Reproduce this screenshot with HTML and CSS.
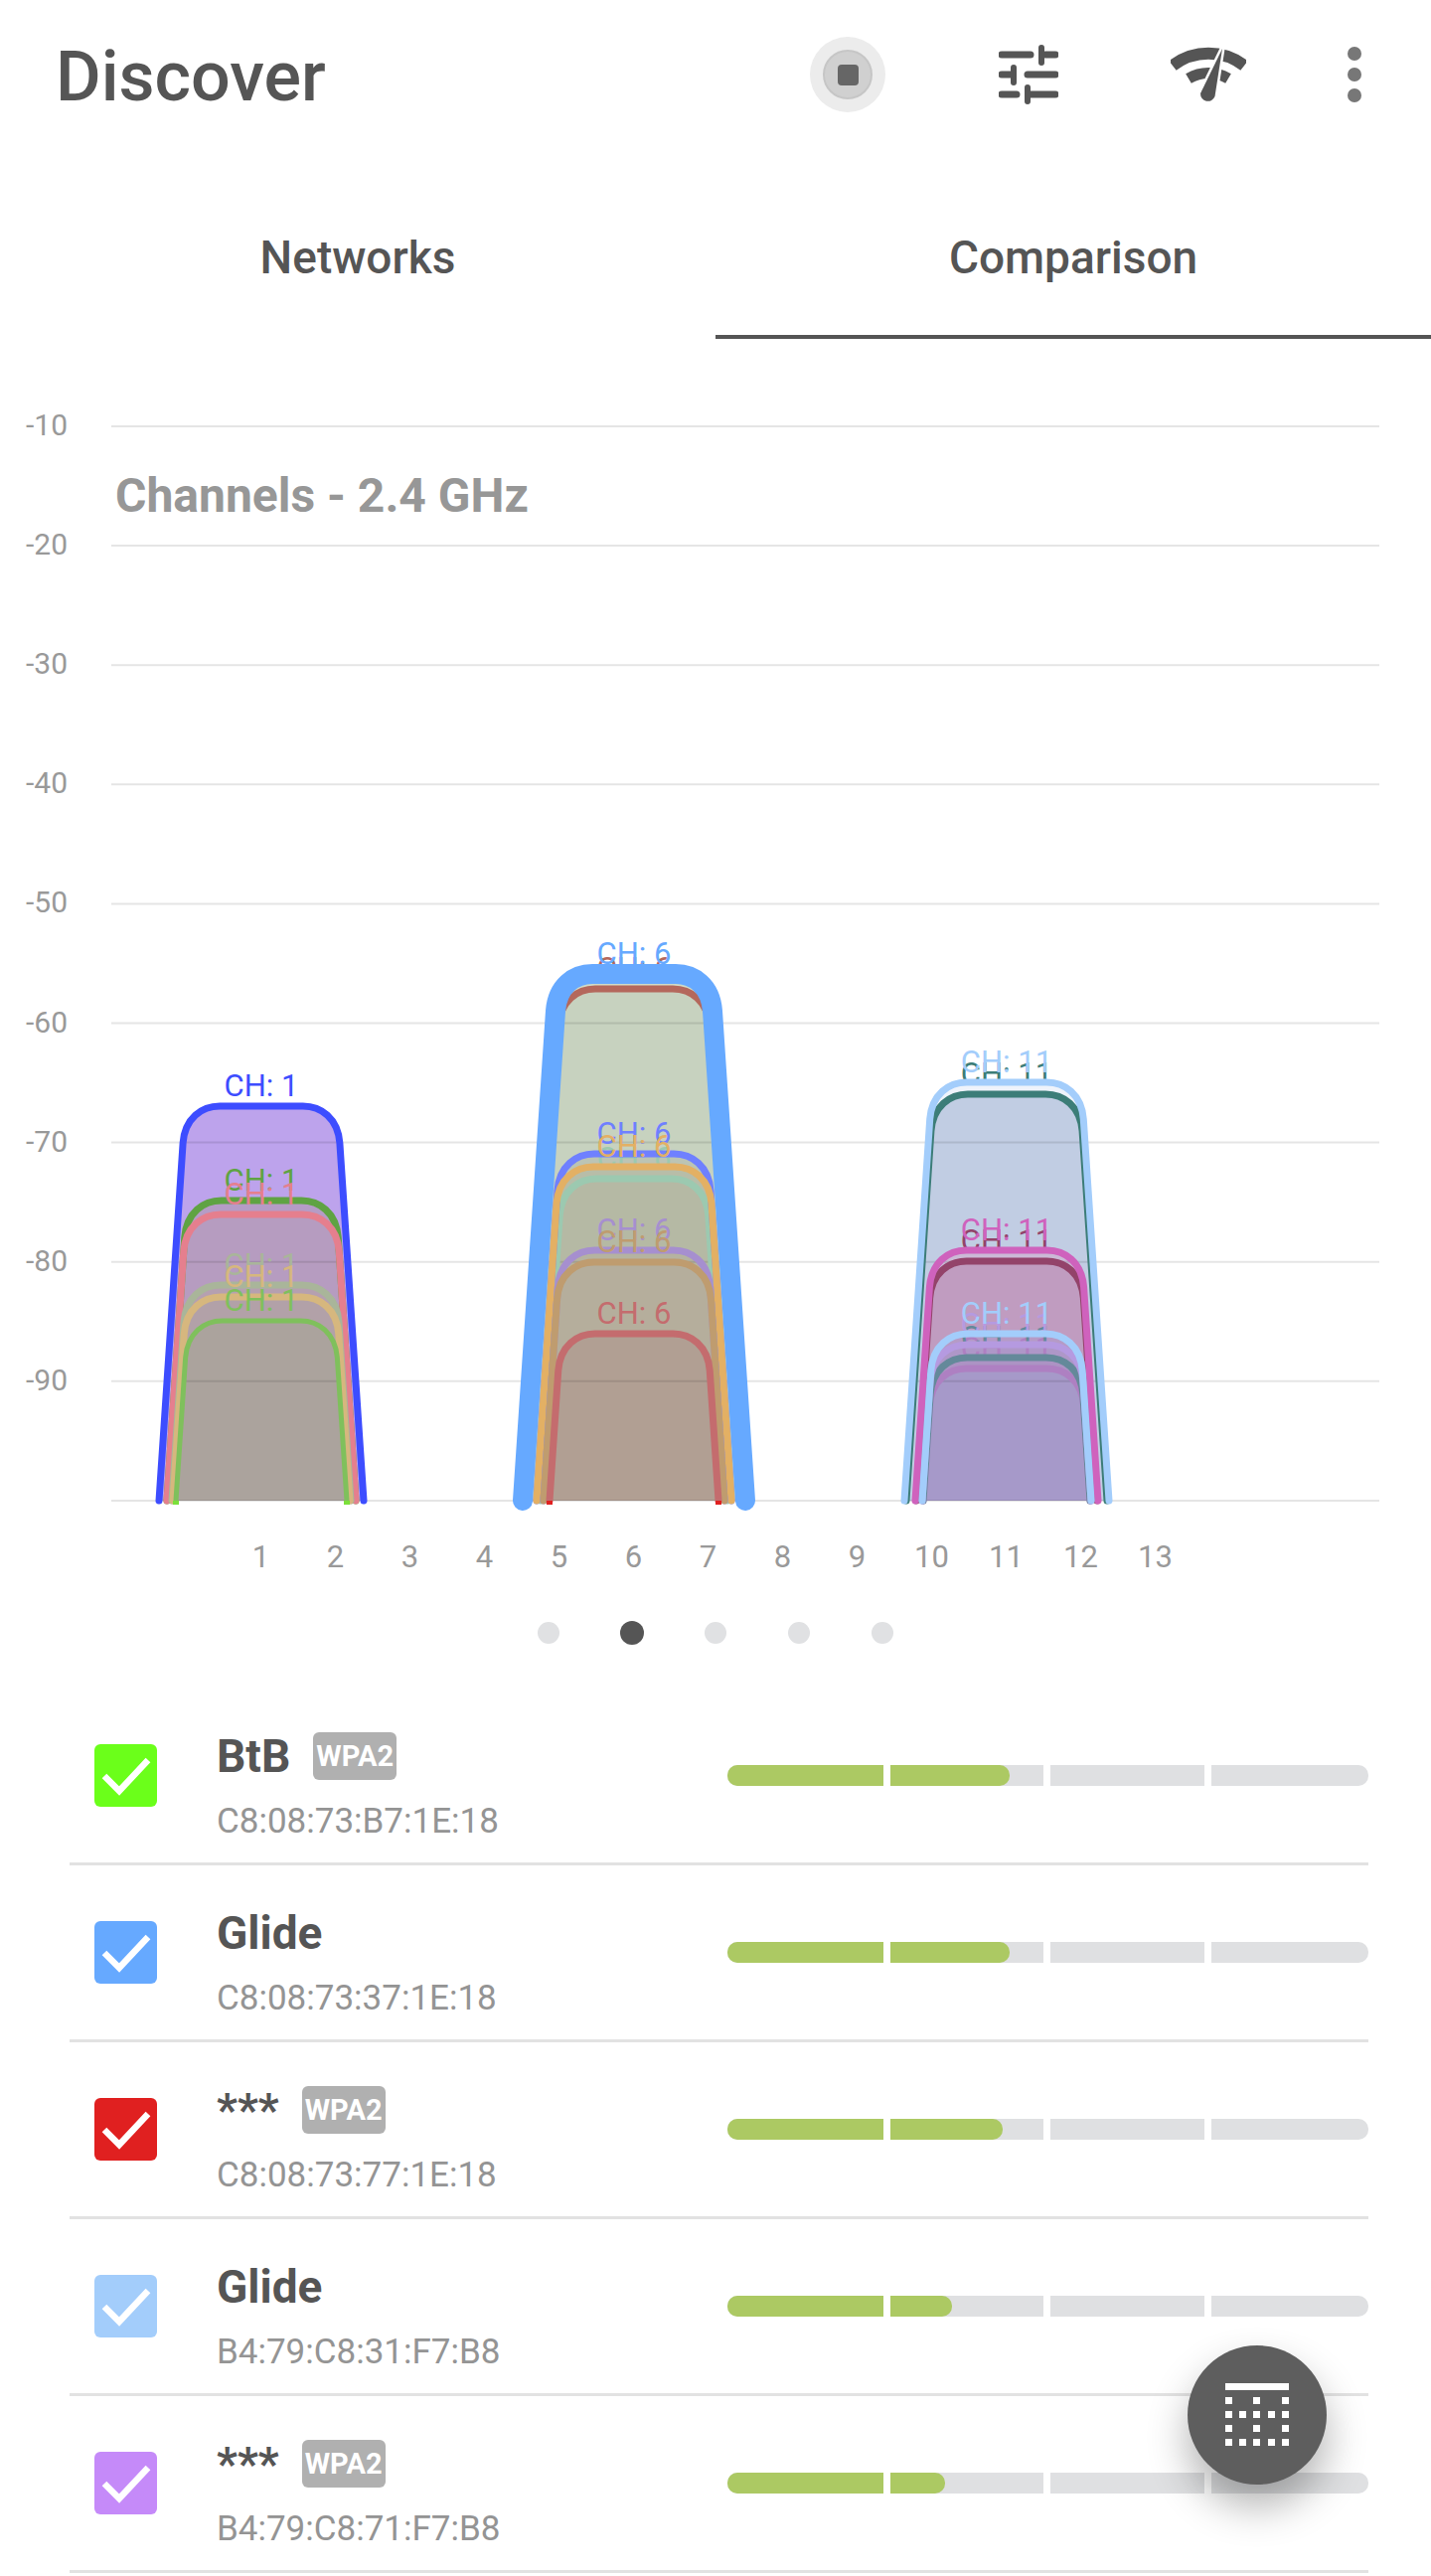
FILE: index.html
```html
<!DOCTYPE html>
<html lang="en">
<head>
    <meta charset="UTF-8">
    <meta name="viewport" content="width=device-width, initial-scale=1.0">
    <title>Discover</title>
    <link rel="stylesheet" href="styles.css">
</head>
<body>
    <div class="page">
        <header class="topbar">
            <h1 class="title">Discover</h1>
            <div class="actions">
                <div class="record"><div class="record-ring"><div class="record-stop"></div></div></div>
                <svg class="icon-tune" width="60" height="60" viewBox="0 0 60 60">
                    <g fill="none" stroke="#555" stroke-width="7" stroke-linecap="round">
                        <path d="M3 10H32M47 10H57"/>
                        <path d="M3 30H14M29 30H57"/>
                        <path d="M3 50H18M32 50H57"/>
                    </g>
                    <g fill="none" stroke="#555" stroke-width="6" stroke-linecap="round">
                        <path d="M43 3V18"/>
                        <path d="M15 23V38"/>
                        <path d="M29 43V57"/>
                    </g>
                </svg>
                <svg class="icon-wifi" width="76" height="56" viewBox="0 0 76 56">
                    <g fill="none" stroke="#555">
                        <path stroke-width="12" d="M2 19A59 59 0 0 1 74 19"/>
                        <path stroke-width="11" d="M18 32A39 39 0 0 1 58 32"/>
                    </g>
                    <path fill="#555" stroke="#fff" stroke-width="5" paint-order="stroke" d="M52 2L44.500 50A7.500 7.500 0 0 1 30 47Z"/>
                </svg>
                <svg class="icon-more" width="14" height="56" viewBox="0 0 14 56">
                    <circle cx="7" cy="7" r="7"/>
                    <circle cx="7" cy="28" r="7"/>
                    <circle cx="7" cy="49" r="7"/>
                </svg>
            </div>
        </header>

        <nav class="tabs">
            <div class="tab">Networks</div>
            <div class="tab tab-active">Comparison</div>
        </nav>

        <svg class="chart" id="chart" width="1440" height="1200" viewBox="0 400 1440 1200">
            <g id="chartFills"></g>
            <g id="chartGrid"></g>
            <text class="chart-title" x="116" y="515">Channels - 2.4 GHz</text>
            <g id="chartLines"></g>
        </svg>

        <div class="pager">
            <span class="dot"></span>
            <span class="dot dot-active"></span>
            <span class="dot"></span>
            <span class="dot"></span>
            <span class="dot"></span>
        </div>

        <ul class="networks">
            <li class="network">
                <svg class="check check-green" viewBox="0 0 63 63"><path d="M10 32L25 47L54 16"/></svg>
                <div class="info">
                    <div class="name-line"><span class="name">BtB</span><span class="badge">WPA2</span></div>
                    <div class="mac">C8:08:73:B7:1E:18</div>
                </div>
                <div class="signal">
                    <div class="signal-fill" style="width: 44%"></div>
                    <span class="tick tick-1"></span><span class="tick tick-2"></span><span class="tick tick-3"></span>
                </div>
            </li>
            <li class="network">
                <svg class="check check-blue" viewBox="0 0 63 63"><path d="M10 32L25 47L54 16"/></svg>
                <div class="info">
                    <div class="name-line"><span class="name">Glide</span></div>
                    <div class="mac">C8:08:73:37:1E:18</div>
                </div>
                <div class="signal">
                    <div class="signal-fill" style="width: 44%"></div>
                    <span class="tick tick-1"></span><span class="tick tick-2"></span><span class="tick tick-3"></span>
                </div>
            </li>
            <li class="network">
                <svg class="check check-red" viewBox="0 0 63 63"><path d="M10 32L25 47L54 16"/></svg>
                <div class="info">
                    <div class="name-line"><span class="name">***</span><span class="badge">WPA2</span></div>
                    <div class="mac">C8:08:73:77:1E:18</div>
                </div>
                <div class="signal">
                    <div class="signal-fill" style="width: 43%"></div>
                    <span class="tick tick-1"></span><span class="tick tick-2"></span><span class="tick tick-3"></span>
                </div>
            </li>
            <li class="network">
                <svg class="check check-sky" viewBox="0 0 63 63"><path d="M10 32L25 47L54 16"/></svg>
                <div class="info">
                    <div class="name-line"><span class="name">Glide</span></div>
                    <div class="mac">B4:79:C8:31:F7:B8</div>
                </div>
                <div class="signal">
                    <div class="signal-fill" style="width: 35%"></div>
                    <span class="tick tick-1"></span><span class="tick tick-2"></span><span class="tick tick-3"></span>
                </div>
            </li>
            <li class="network">
                <svg class="check check-purple" viewBox="0 0 63 63"><path d="M10 32L25 47L54 16"/></svg>
                <div class="info">
                    <div class="name-line"><span class="name">***</span><span class="badge">WPA2</span></div>
                    <div class="mac">B4:79:C8:71:F7:B8</div>
                </div>
                <div class="signal">
                    <div class="signal-fill" style="width: 34%"></div>
                    <span class="tick tick-1"></span><span class="tick tick-2"></span><span class="tick tick-3"></span>
                </div>
            </li>
        </ul>

        <button class="fab">
            <svg width="64" height="64" viewBox="0 0 64 64" fill="#fff">
                <rect x="0" y="0" width="64" height="7"/>
                <path d="M0 14h7v7H0zM28 14h7v7h-7zM57 14h7v7h-7z"/>
                <path d="M0 28h7v7H0zM14 28h7v7h-7zM28 28h7v7h-7zM43 28h7v7h-7zM57 28h7v7h-7z"/>
                <path d="M0 42h7v7H0zM28 42h7v7h-7zM57 42h7v7h-7z"/>
                <path d="M0 56h7v7H0zM14 56h7v7h-7zM28 56h7v7h-7zM43 56h7v7h-7zM57 56h7v7h-7z"/>
            </svg>
        </button>
    </div>

    <script src="chart.js"></script>
</body>
</html>
```

FILE: styles.css
```css
* {
    box-sizing: border-box;
}

body {
    margin: 0;
    padding: 0;
    background-color: #fff;
    font-family: Roboto, "Liberation Sans", sans-serif;
    color: #555;
}

.page {
    position: relative;
    width: 1440px;
    height: 2592px;
    overflow: hidden;
}

.topbar {
    display: flex;
    align-items: flex-start;
    justify-content: space-between;
    height: 174px;
    padding: 37px 70px 0 56px;
}

.title {
    margin: 0;
    font-size: 70px;
    font-weight: 500;
    line-height: 80px;
}

.actions {
    display: flex;
    align-items: center;
}

.record {
    display: flex;
    align-items: center;
    justify-content: center;
    width: 76px;
    height: 76px;
    border-radius: 50%;
    background-color: #ececec;
}

.record-ring {
    display: flex;
    align-items: center;
    justify-content: center;
    width: 50px;
    height: 50px;
    border: 2px solid #c6c6c6;
    border-radius: 50%;
    background-color: #d0d0d0;
}

.record-stop {
    width: 21px;
    height: 21px;
    border-radius: 4px;
    background-color: #666;
}

.icon-tune {
    margin-left: 114px;
}

.icon-wifi {
    margin-left: 113px;
}

.icon-more {
    margin-left: 102px;
    fill: #777;
}

.tabs {
    display: flex;
    height: 167px;
}

.tab {
    flex: 1;
    display: flex;
    align-items: center;
    justify-content: center;
    padding-top: 6px;
    border-bottom: 4px solid transparent;
    font-size: 46px;
    font-weight: 500;
}

.tab-active {
    border-bottom-color: #555;
}

.chart {
    display: block;
    margin-top: 59px;
}

.chart text {
    font-family: Roboto, "Liberation Sans", sans-serif;
}

.chart-title {
    font-size: 48px;
    font-weight: 700;
    fill: #979797;
}

.axis-label {
    font-size: 30px;
    fill: #999;
}

.curve-label {
    font-size: 31px;
    text-anchor: middle;
}

.pager {
    display: flex;
    align-items: center;
    justify-content: center;
    gap: 62px;
    height: 24px;
    margin-top: 31px;
}

.dot {
    width: 22px;
    height: 22px;
    border-radius: 50%;
    background-color: #e0e1e3;
}

.dot-active {
    width: 24px;
    height: 24px;
    margin: 0 -1px;
    background-color: #555;
}

.networks {
    margin: 44px 63px 0 70px;
    padding: 0;
    list-style: none;
}

.network {
    display: flex;
    align-items: center;
    height: 178px;
    padding-left: 25px;
    border-bottom: 3px solid #e2e2e2;
}

.check {
    flex: none;
    width: 63px;
    height: 63px;
    border-radius: 6px;
}

.check path {
    fill: none;
    stroke: #fff;
    stroke-width: 6.500;
}

.check-green {
    background-color: #6bff1a;
}

.check-blue {
    background-color: #66a9ff;
}

.check-red {
    background-color: #e02020;
}

.check-sky {
    background-color: #a3cdfb;
}

.check-purple {
    background-color: #c58af9;
}

.info {
    margin: 22px 0 0 60px;
}

.name-line {
    display: flex;
    align-items: center;
    height: 48px;
}

.name {
    font-size: 46px;
    font-weight: 700;
    line-height: 48px;
}

.badge {
    display: flex;
    align-items: center;
    justify-content: center;
    width: 84px;
    height: 48px;
    margin-left: 23px;
    border-radius: 6px;
    background-color: #b0b0b0;
    color: #fff;
    font-size: 29px;
    font-weight: 700;
}

.mac {
    margin-top: 22px;
    font-size: 35px;
    line-height: 40px;
    color: #949494;
}

.signal {
    position: relative;
    flex: none;
    width: 645px;
    height: 21px;
    margin-left: auto;
    overflow: hidden;
    border-radius: 10px;
    background-color: #dfe0e2;
}

.signal-fill {
    height: 100%;
    border-radius: 0 10px 10px 0;
    background-color: #acc963;
}

.tick {
    position: absolute;
    top: 0;
    width: 7px;
    height: 100%;
    background-color: #fff;
}

.tick-1 {
    left: 157px;
}

.tick-2 {
    left: 318px;
}

.tick-3 {
    left: 480px;
}

.fab {
    position: absolute;
    left: 1195px;
    top: 2360px;
    display: flex;
    align-items: center;
    justify-content: center;
    width: 140px;
    height: 140px;
    padding: 0;
    border: none;
    border-radius: 50%;
    background-color: #5e5e5e;
    box-shadow: 0 22px 40px rgba(0, 0, 0, 0.3);
}
```

FILE: chart.js
```js
const SVG_NS = "http://www.w3.org/2000/svg";
const BASE = 1510;

const fillsGroup = document.getElementById("chartFills");
const gridGroup = document.getElementById("chartGrid");
const linesGroup = document.getElementById("chartLines");

// top = y of the curve, half = half width at the baseline
const channels = [
    { channel: 1, cx: 263, curves: [
        { top: 1113, half: 103, color: "#3d4dff", fill: "#bda3ec" },
        { top: 1208, half: 95, color: "#5fa343", fill: "#b59cc6" },
        { top: 1222, half: 95, color: "#e57f8e", fill: "#b69cc0" },
        { top: 1293, half: 90, color: "#a9b59a", fill: "#b5a0b0" },
        { top: 1305, half: 89, color: "#d6b77e", fill: "#b2a1a8" },
        { top: 1329, half: 86, color: "#7fc05c", fill: "#aba39d", tip: "#7be03a", width: 5 }
    ] },
    { channel: 6, cx: 638, curves: [
        { top: 995, half: 108, color: "#b4685c", fill: "#c7d2bf" },
        { top: 980, half: 112, color: "#66a9ff", fill: "#d0dcc8", width: 20 },
        { top: 1186, half: 94, color: "#9cc9b0", fill: "#b5b9a4" },
        { top: 1161, half: 98, color: "#6f80ff", fill: "#bcc4b4" },
        { top: 1174, half: 98, color: "#e3b064", fill: "#b8bda8" },
        { top: 1258, half: 91, color: "#a68fcf", fill: "#b5b3a0" },
        { top: 1270, half: 91, color: "#bf9c6f", fill: "#b5ae9c" },
        { top: 1342, half: 85, color: "#c46c6e", fill: "#b19f93", tip: "#e02020" }
    ] },
    { channel: 11, cx: 1013, curves: [
        { top: 1101, half: 101, color: "#3c7d78", fill: "#c1cde3" },
        { top: 1089, half: 103, color: "#a3cdfb", fill: "#eef3fb" },
        { top: 1269, half: 91, color: "#93436a", fill: "#c09cc0" },
        { top: 1258, half: 92, color: "#cf62bd", fill: "#cbb9d6" },
        { top: 1377, half: 84, color: "#ae80c2", fill: "#a699c9" },
        { top: 1366, half: 84, color: "#64899a", fill: "#ac93c4" },
        { top: 1353, half: 85, color: "#b59ae0", fill: "#ae97c8" },
        { top: 1342, half: 85, color: "#a3cdfb", fill: "#b59bc6" }
    ] }
];

function addSvg(parent, tag, attrs, text) {
    const el = document.createElementNS(SVG_NS, tag);
    Object.keys(attrs).forEach((key) => el.setAttribute(key, attrs[key]));
    if (text) el.textContent = text;
    parent.appendChild(el);
    return el;
}

function curvePath(cx, top, half) {
    const shoulderY = top + 37;
    const inset = half - 0.067 * (BASE - shoulderY);
    const flat = inset - 37;
    return `M${cx - half} ${BASE} L${cx - inset} ${shoulderY} ` +
        `C${cx - inset + 2} ${top + 12} ${cx - flat - 18} ${top} ${cx - flat} ${top} ` +
        `H${cx + flat} C${cx + flat + 18} ${top} ${cx + inset - 2} ${top + 12} ${cx + inset} ${shoulderY} ` +
        `L${cx + half} ${BASE}`;
}

// grid lines and axis labels
for (let i = 0; i < 9; i++) {
    const y = 429 + i * 120.1;
    addSvg(gridGroup, "line", { x1: 112, x2: 1388, y1: y, y2: y, stroke: "rgba(0,0,0,0.1)", "stroke-width": 2 });
    addSvg(gridGroup, "text", { class: "axis-label", x: 26, y: y + 9 }, String(-10 * (i + 1)));
}
addSvg(gridGroup, "line", { x1: 112, x2: 1388, y1: BASE, y2: BASE, stroke: "rgba(0,0,0,0.1)", "stroke-width": 2 });

for (let ch = 1; ch <= 13; ch++) {
    addSvg(gridGroup, "text", { class: "curve-label", x: 262.500 + (ch - 1) * 75, y: 1577, fill: "#999" }, String(ch));
}

channels.forEach((group) => {
    const byHeight = group.curves.slice().sort((a, b) => a.top - b.top);
    byHeight.forEach((curve) => {
        addSvg(fillsGroup, "path", { d: curvePath(group.cx, curve.top, curve.half), fill: curve.fill });
    });

    group.curves.forEach((curve) => {
        addSvg(linesGroup, "path", {
            d: curvePath(group.cx, curve.top, curve.half),
            fill: "none",
            stroke: curve.color,
            "stroke-width": curve.width || 7,
            "stroke-linecap": "round"
        });
        addSvg(linesGroup, "text", {
            class: "curve-label",
            x: group.cx,
            y: curve.top - 10,
            fill: curve.color
        }, "CH: " + group.channel);
        if (curve.tip) {
            [-1, 1].forEach((side) => {
                const x = group.cx + side * curve.half;
                addSvg(linesGroup, "line", { x1: x, x2: x, y1: BASE, y2: BASE + 4, stroke: curve.tip, "stroke-width": 6 });
            });
        }
    });
});
```
